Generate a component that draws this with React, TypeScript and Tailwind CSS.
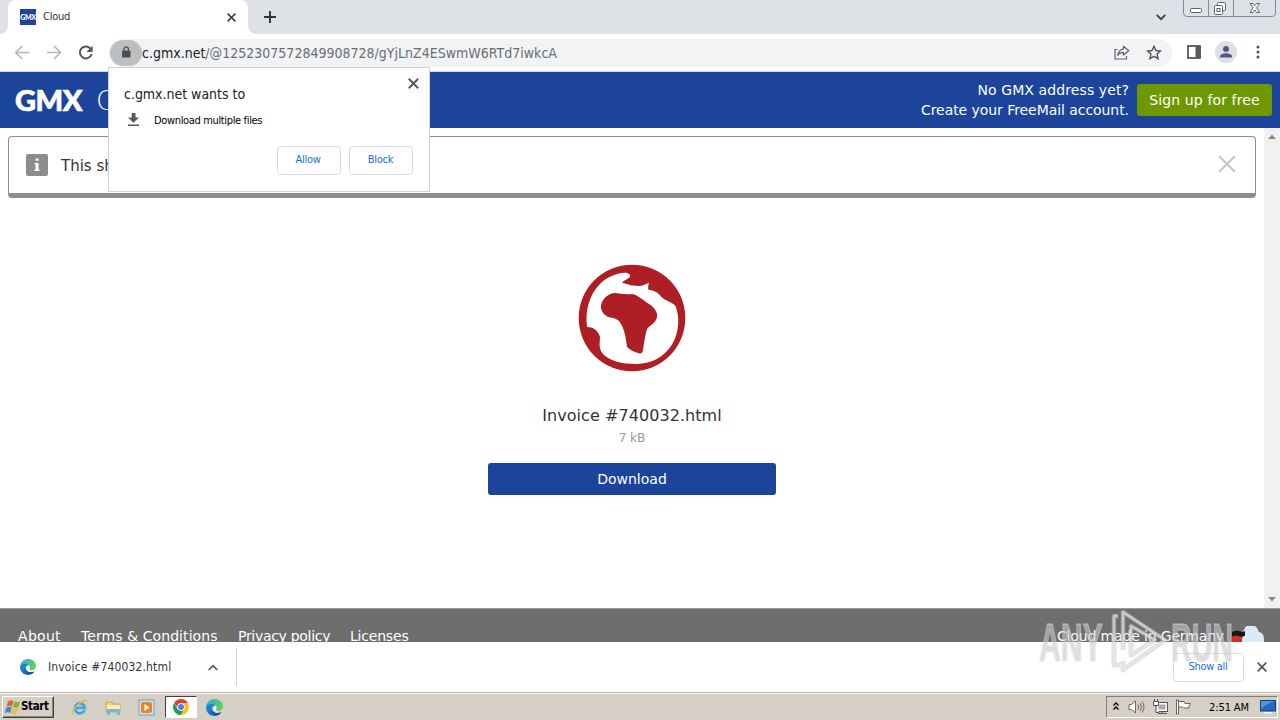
import React from "react";

const verdana = "font-['DejaVu_Sans',sans-serif]";
const tahoma = "font-['DejaVu_Sans_Condensed','DejaVu_Sans',sans-serif] [font-stretch:condensed]";

function Cross({ size, color, width }: { size: number; color: string; width: number }) {
  return (
    <svg width={size} height={size} viewBox="0 0 10 10" stroke={color} strokeWidth={width} fill="none">
      <path d="M.7 .7L9.3 9.3M9.3 .7L.7 9.3" />
    </svg>
  );
}

function EdgeIcon({ size }: { size: number }) {
  return (
    <svg width={size} height={size} viewBox="0 0 16 16">
      <defs>
        <linearGradient id="edgeTop" x1="0" y1="0" x2="1" y2="0.5">
          <stop offset="0" stopColor="#2aa9e0" />
          <stop offset="1" stopColor="#5fd35c" />
        </linearGradient>
        <linearGradient id="edgeLow" x1="0" y1="0" x2="1" y2="1">
          <stop offset="0" stopColor="#1b8ddb" />
          <stop offset="1" stopColor="#1560b5" />
        </linearGradient>
      </defs>
      <path d="M.2 7C.8 3 4 .1 8 .1c4.600 0 8 3.300 8 6.900 0 2.600-1.900 4.200-4.200 4.200-1.800 0-2.800-.7-2.500-1.300.8-1 .7-2-.1-3C7 4.600 2.800 4.200.2 7z" fill="url(#edgeTop)" />
      <path d="M.2 7C2 3.900 6.700 4.300 8.600 6.100 6.300 6.200 5.100 8.200 5.600 10.200c.7 2.700 4.300 4.100 8.600 2.700C11 17 4.700 16.900 1.700 12.900.3 11.100-.1 9 .2 7z" fill="url(#edgeLow)" />
      <path d="M8.600 6.100C5.500 6.500 5 10.100 7 12c2 1.700 5 1.500 7.700.3-.8 1.500-2.700 2.700-4.700 2.900-4.600-.4-7.300-6.300-1.400-9.100z" fill="#155098" />
      <path d="M8.700 6.200c1.400 1 1.500 2.500.6 3.700-.4.900 1.200 1.500 2.900 1.300-1.500.9-3.600.3-4.500-1-.8-1.500-.4-3.200 1-4z" fill="#f2fbff" />
    </svg>
  );
}

function TabStrip() {
  return (
    <div className="flex h-[34px] bg-[#dee1e6]">
      <div className="flex w-2 items-end bg-white">
        <div className="h-[34px] w-2 rounded-br-lg bg-[#dee1e6]" />
      </div>
      <div className="flex h-[34px] w-[240px] items-center rounded-t-lg bg-white pl-3 pr-[12px]">
        <div className="flex h-4 w-4 items-center justify-center bg-[#1c449b] font-['Lato',sans-serif] text-[7px] font-black leading-none tracking-[-0.3px] text-white">
          GMX
        </div>
        <span className={`${tahoma} ml-[7px] flex-1 text-[11px] leading-4 tracking-[-0.25px] text-[#333]`}>Cloud</span>
        <Cross size={9} color="#3c4043" width={1.8} />
      </div>
      <div className="w-2 bg-white">
        <div className="h-[34px] w-2 rounded-bl-lg bg-[#dee1e6]" />
      </div>
      <div className="flex w-[28px] items-center justify-center">
        <svg width="12" height="12" viewBox="0 0 12 12" stroke="#33373b" strokeWidth="2">
          <path d="M6 0v12M0 6h12" />
        </svg>
      </div>
      <div className="flex flex-1 items-start justify-end pr-[4px]">
        <svg className="mr-[17px] mt-[14px]" width="10" height="7" viewBox="0 0 10 7" fill="none" stroke="#3c4043" strokeWidth="1.8">
          <path d="M.7 .8L5 5.200 9.300 .8" />
        </svg>
        <svg width="93" height="17" viewBox="0 0 93 17" fill="none">
          <path d="M.5 0v13q0 3.500 3.500 3.500h85q3.500 0 3.500-3.500V0M25.500 0v16M50.500 0v16" stroke="#868a90" />
          <rect x="7.500" y="8.500" width="11" height="4" rx="1" fill="#fff" stroke="#60646a" />
          <rect x="34.500" y="2.500" width="8" height="8" rx="1" fill="#fff" stroke="#60646a" />
          <rect x="31.500" y="5.500" width="8" height="9" rx="1" fill="#fff" stroke="#60646a" />
          <rect x="34" y="8.500" width="3" height="3" stroke="#60646a" />
          <path d="M67 3.500h3l1.800 2.300 1.800-2.300h3l-3 4.200 3 4.800h-3l-1.800-2.500-1.800 2.500h-3l3-4.800z" fill="#fff" stroke="#60646a" />
        </svg>
      </div>
    </div>
  );
}

function Toolbar() {
  return (
    <div className="flex h-[37px] items-center bg-white pl-[15px] pr-[10px]">
      <svg width="80" height="16" viewBox="0 0 80 16" fill="none">
        <path d="M14.500 7.500H1M7.300 1L.8 7.500l6.500 6.500" stroke="#b6b8bb" strokeWidth="1.700" />
        <path d="M32 7.500h13.500M39 1L45.500 7.500 39 14" stroke="#b6b8bb" strokeWidth="1.700" />
        <path d="M76 4.200A6 6 0 1 0 76.700 9" stroke="#55585c" strokeWidth="2" />
        <path d="M77.700 .7v6.300h-6.300z" fill="#55585c" />
      </svg>
      <div className="ml-[14px] flex h-7 w-[1063px] items-center rounded-full bg-[#f1f3f4] pr-[10px]">
        <div className="ml-px flex h-[26px] w-8 items-center justify-center rounded-full bg-[#bcbfc1]">
          <svg className="mb-[2px]" width="10" height="12" viewBox="0 0 10 12">
            <rect x="1" y="4.500" width="8.500" height="7" rx="1" fill="#4d5053" />
            <path d="M3 5V3.100a2.200 2.200 0 0 1 4.400 0V5" fill="none" stroke="#4d5053" strokeWidth="1.200" />
          </svg>
        </div>
        <span className={`${tahoma} flex-1 whitespace-nowrap text-[14px] leading-5 text-[#6a6e73]`}>
          <span className="tracking-[0px] text-[#202124]">c.gmx.net</span>
          <span className="tracking-[0.01px]">/@1252307572849908728/gYjLnZ4ESwmW6RTd7iwkcA</span>
        </span>
        <svg className="mr-[16px]" width="16" height="15" viewBox="0 0 16 15" fill="none" stroke="#5f6368" strokeWidth="1.200">
          <path d="M3.500 4.500H1v9.500h11.500V11" />
          <path d="M9.500 1.200L14.800 5.700 9.500 10V7.400C7 7.400 5 8.300 3.700 10.500 4.200 6.800 6.500 4.200 9.500 3.800z" strokeLinejoin="round" />
        </svg>
        <svg width="16" height="16" viewBox="0 0 16 16" fill="none" stroke="#4f5358" strokeWidth="1.400">
          <path d="M8 1.300l1.900 4.200 4.600.5-3.400 3.100 1 4.500L8 11.300l-4.100 2.300 1-4.500L1.500 6 6.100 5.500z" />
        </svg>
      </div>
      <svg className="mb-px ml-[15px]" width="14" height="14" viewBox="0 0 14 14">
        <rect x="1" y="1" width="12" height="12" fill="#fff" stroke="#55585c" strokeWidth="1.800" />
        <path d="M8.500 1h5v12h-5z" fill="#55585c" />
      </svg>
      <svg className="mb-px ml-[14px]" width="22" height="22" viewBox="0 0 22 22">
        <circle cx="11" cy="11" r="11" fill="#dcdfe4" />
        <circle cx="11" cy="8" r="3" fill="#4c5b7e" />
        <path d="M5 16.500v-1.300c0-2 3.500-3 6-3s6 1 6 3v1.300z" fill="#4c5b7e" />
      </svg>
      <svg className="mb-px ml-[19px]" width="4" height="14" viewBox="0 0 4 14" fill="#4f5358">
        <circle cx="2" cy="2" r="1.500" />
        <circle cx="2" cy="7" r="1.500" />
        <circle cx="2" cy="12" r="1.500" />
      </svg>
    </div>
  );
}

function PermissionPrompt() {
  return (
    <div className={`${tahoma} absolute left-[108px] top-[67px] flex h-[125px] w-[322px] flex-col border border-[#cfd1d4] bg-white pl-[15px] pr-4 text-black`}>
      <div className="flex h-9 items-end justify-between">
        <span className="text-[14px] leading-5 tracking-[-0.02px] text-[#202124]">c.gmx.net wants to</span>
        <div className="mb-[11px] mr-[-10px] flex h-5 w-5 items-center justify-center">
          <Cross size={11} color="#55585c" width={1.7} />
        </div>
      </div>
      <div className="mt-[6px] flex h-5 items-center">
        <svg className="ml-1" width="11" height="14" viewBox="0 0 11 14" fill="#55585c">
          <path d="M3.700 0h3.800v4.500H11L5.500 9.700 0 4.500h3.700zM0 11.500h11V13H0z" />
        </svg>
        <span className="ml-[15px] mt-px text-[11px] leading-4 tracking-[-0.35px]">Download multiple files</span>
      </div>
      <div className="mt-[16px] flex justify-end gap-2 text-[11px] tracking-[-0.3px] text-[#1a6fd0]">
        <div className="flex h-[29px] w-16 items-center justify-center rounded border border-[#dadce0] pr-0.5">Allow</div>
        <div className="flex h-[29px] w-16 items-center justify-center rounded border border-[#dadce0] pr-px">Block</div>
      </div>
    </div>
  );
}

function SiteHeader() {
  return (
    <div className={`${verdana} flex h-14 items-center bg-[#1c449b] pl-[15px] pr-2 text-white`}>
      <span className="mb-[2px] w-[81px] font-['Lato',sans-serif] text-[29px] font-black leading-none tracking-[-0.4px] [-webkit-text-stroke:0.7px_white]">GMX</span>
      <span className="flex-1 text-[27px] font-extralight leading-none">C</span>
      <div className="mr-2 text-right text-[14px] leading-5">
        <div className="mr-[-0.1px] tracking-[0.1px]">No GMX address yet?</div>
        <div className="tracking-[-0.06px]">Create your FreeMail account.</div>
      </div>
      <div className="flex h-8 w-[135px] items-center justify-center rounded-[3px] bg-[#6f9800] text-[14px] tracking-[0.12px]">Sign up for free</div>
    </div>
  );
}

function Globe() {
  return (
    <svg width="108" height="108" viewBox="0 0 108 108">
      <circle cx="54" cy="54" r="53.300" fill="#ad1f24" />
      <path
        d="M9 63C7 47 11 31 22 20 30 12 42 8 49 9c4 1 4 4 1 5.500-2 1.500-4 2-6 4C50 21 56 22 61 22c4 0 7-2 10-3.500-1 3-1 5-.5 7.500 5 0 9 2 13 7 4 4 9 4 14 9 3 8 4 17 1 28C94 86 80 100 58 100c-14 0-26-3-33-10-5-6-3-12-3-17C20 66 15 63 9 63z"
        fill="#fff"
      />
      <path
        d="M23 41c2-7 7-11 13-12 6 0 11 2 18 1 6 1 12 7 20 12 4 4 6 8 5 11-1 6-7 8-10 12-2 7-3 14-4 21-1 4-2 4-5 3-4-1-8-3-11-6-1-8-2-16-6-23-3-6-8-6-13-7-4-2-8-7-7-12z"
        fill="#ad1f24"
      />
    </svg>
  );
}

function ScrollBar() {
  return (
    <div className="flex w-4 flex-col items-center justify-between bg-[#f1f1f1] py-[6px]">
      <svg width="8" height="5" viewBox="0 0 8 5" fill="#8b8b8b"><path d="M0 5L4 .5 8 5z" /></svg>
      <svg width="8" height="5" viewBox="0 0 8 5" fill="#8b8b8b"><path d="M0 0l4 4.500L8 0z" /></svg>
    </div>
  );
}

function Content() {
  return (
    <div className={`${verdana} flex h-[480px] bg-white text-[#333]`}>
      <div className="flex flex-1 flex-col items-center px-2 pt-2">
        <div className="flex h-[62px] w-full items-center rounded-[4px] border border-b-[5px] border-[#8d8d8d] pl-[17px] pr-[19px]">
          <svg width="22" height="22" viewBox="0 0 22 22">
            <rect width="22" height="22" rx="2" fill="#8d8d8d" />
            <path d="M9.700 4.500h2.800v2.300H9.700zM8.500 9h4v7.500h-3V10.300h-1z" fill="#fff" />
            <path d="M8.500 15.500h5v1.500h-5z" fill="#fff" />
          </svg>
          <span className="ml-[13px] mt-[2px] flex-1 text-[15px] leading-5">This sh</span>
          <div className="mb-[2px]"><Cross size={18} color="#c7c7c7" width={1.3} /></div>
        </div>
        <div className="mt-[66px]"><Globe /></div>
        <div className="mt-[34px] text-[16px] leading-5 tracking-[0.06px]">Invoice #740032.html</div>
        <div className="mt-[4px] text-[12px] leading-4 text-[#999]">7 kB</div>
        <div className="mt-[17px] flex h-8 w-72 items-center justify-center rounded-[3px] bg-[#1c449b] text-[14px] text-white">Download</div>
      </div>
      <ScrollBar />
    </div>
  );
}

function SiteFooter() {
  return (
    <div className={`${verdana} flex h-[34px] items-start overflow-hidden border-t border-[#999] bg-[#6e6e6e] pl-[18px] pr-4 pt-[17px] text-[14px] leading-5 text-white`}>
      <div className="flex flex-1 whitespace-nowrap">
        <span className="w-[63px] tracking-[0.3px]">About</span>
        <span className="w-[157px] tracking-[0.08px]">Terms &amp; Conditions</span>
        <span className="w-[112px] tracking-[-0.3px]">Privacy policy</span>
        <span className="tracking-[-0.2px]">Licenses</span>
      </div>
      <span className="tracking-[-0.15px]">Cloud made in Germany</span>
      <svg className="ml-2 shrink-0" width="32" height="22" viewBox="0 0 32 22">
        <path d="M9 22V8q0-3 3-4Q13-1 19-1q6 0 8 7 5 1 5 7v9z" fill="#dceaf7" />
        <path d="M0 6q4-2 7-1 4 1 6 0v5q-4 2-7 0-3-1-6 1z" fill="#171717" />
        <path d="M0 11q3-2 6-1 3 1 5 1v9H0z" fill="#dc2c20" />
        <path d="M10 12q3-4 6 0 4 1 5 6H10z" fill="#dceaf7" />
      </svg>
    </div>
  );
}

function DownloadShelf() {
  return (
    <div className={`${tahoma} flex h-[50px] items-center bg-white pl-5 pr-[13px]`}>
      <EdgeIcon size={16} />
      <span className="mb-px ml-3 w-[160px] text-[12px] leading-4 tracking-[0.15px] text-[#333]">Invoice #740032.html</span>
      <svg width="10" height="7" viewBox="0 0 10 7" fill="none" stroke="#55585c" strokeWidth="1.700">
        <path d="M.7 6L5 1.600 9.300 6" />
      </svg>
      <div className="ml-[18px] h-[38px] w-px bg-[#cfd1d4]" />
      <div className="flex-1" />
      <div className="mr-[13px] flex h-[29px] w-[71px] items-center justify-center rounded border border-[#dadce0] pr-px text-[11px] tracking-[-0.3px] text-[#1a6fd0]">
        Show all
      </div>
      <Cross size={10} color="#55585c" width={1.8} />
    </div>
  );
}

function Watermark() {
  return (
    <div className="absolute left-[1039px] top-[610px] flex h-[64px] w-[200px] items-center font-['Liberation_Sans',sans-serif] text-[53px] font-bold leading-none text-[#d8d8d8]/50 [-webkit-text-stroke:1px_rgba(225,225,225,0.6)] [text-shadow:0_0_2px_rgba(120,120,120,0.2)]">
      <div className="w-[72px]"><span className="inline-block origin-left scale-x-[0.57]">ANY</span></div>
      <svg className="shrink-0" width="60" height="64" viewBox="0 0 60 64" fill="none" strokeLinejoin="round">
        <path d="M7 6H3v49h6M12 40V2l42 28-42 30v-9M20 16v29l24-15z" stroke="#a8a8a8" strokeOpacity=".35" strokeWidth="5" />
        <path d="M7 6H3v49h6M12 40V2l42 28-42 30v-9M20 16v29l24-15z" stroke="#e6e6e6" strokeOpacity=".7" strokeWidth="3" />
      </svg>
      <div className="w-[68px]"><span className="inline-block origin-left scale-x-[0.54]">RUN</span></div>
    </div>
  );
}

function StartFlag() {
  return (
    <svg width="17" height="16" viewBox="0 0 17 16">
      <path d="M4 2.500Q7 .5 9.500 2L8 7.500Q5.500 6 2.500 7.500z" fill="#e8622a" />
      <path d="M10.500 2.300Q13 3.800 16 2.500L14.500 8Q11.500 9.300 9 7.800z" fill="#79b648" />
      <path d="M2.200 8.500Q5 7 7.700 8.500L6.200 14Q3.700 12.500.6 14z" fill="#3f8cd0" />
      <path d="M8.700 8.900Q11.500 10.300 14.200 9l-1.500 5.500Q9.700 15.800 7.200 14.300z" fill="#f3bd2c" />
    </svg>
  );
}

function Taskbar() {
  return (
    <div className={`${tahoma} flex h-7 items-center border-t border-[#b9b5ad] bg-[#d5cfc6] pt-px shadow-[inset_0_1px_0_#fff] text-black`}>
      <div className="ml-[2px] flex h-[22px] w-[52px] items-center border border-b-[#404040] border-l-white border-r-[#404040] border-t-white pl-px shadow-[inset_-1px_-1px_0_#8c8880]">
        <StartFlag />
        <span className="text-[11.5px] font-bold leading-none tracking-[-0.35px]">Start</span>
      </div>
      <svg className="ml-[17px]" width="17" height="17" viewBox="0 0 17 17" fill="none">
        <path d="M13.500 11.300A5 5 0 1 1 13.900 8.900H4.500" stroke="#3fa4e2" strokeWidth="2.800" />
        <path d="M2.500 15.500C-.5 15 3 8 9 4c4-3 7-3.500 6.500-.5" stroke="#e9b93c" strokeWidth="1.300" />
      </svg>
      <svg className="ml-[17px]" width="17" height="17" viewBox="0 0 17 17">
        <path d="M1 3h6l1 2h7v8H1z" fill="#f3d06c" stroke="#c79a38" strokeWidth=".7" />
        <path d="M2 6h13v4H2z" fill="#fbebae" />
        <path d="M2 10h13v6h-3v-3H5v3H2z" fill="#73b7e0" />
      </svg>
      <svg className="ml-[16px]" width="17" height="17" viewBox="0 0 17 17">
        <rect x="1" y="1" width="15" height="15" fill="#c9e4f7" stroke="#64a2d3" />
        <rect x="3" y="3" width="11" height="11" rx="2" fill="#f0811c" />
        <path d="M6.500 5l5 3.500-5 3.500z" fill="#fff" />
      </svg>
      <div className="ml-[10px] flex h-[22px] w-8 items-center justify-center border border-b-white border-l-[#404040] border-r-white border-t-[#404040] bg-white">
        <svg width="16" height="16" viewBox="0 0 16 16">
          <path d="M1.070 4A8 8 0 0 1 14.930 4L15 4.500H8L4.800 9z" fill="#dc4438" />
          <path d="M8 4.200h6.900A8 8 0 0 1 7 16l4.300-6z" fill="#fbc318" />
          <path d="M1.070 4L4.700 10 8 11.800h2.300L7.500 16A8 8 0 0 1 1.070 4z" fill="#229c52" />
          <circle cx="8" cy="8" r="3.800" fill="#fff" />
          <circle cx="8" cy="8" r="3" fill="#4285f4" />
        </svg>
      </div>
      <div className="ml-[9px]"><EdgeIcon size={17} /></div>
      <div className="flex-1" />
      <div className="mr-[2px] flex h-[22px] w-[172px] items-center border border-b-white border-l-[#808080] border-r-white border-t-[#808080] pl-[6px]">
        <svg className="mb-[2px]" width="6" height="9" viewBox="0 0 6 9" fill="none" stroke="#000" strokeWidth="1.300">
          <path d="M.5 3.500L3 1l2.500 2.500M.5 7.500L3 5l2.500 2.500" />
        </svg>
        <svg className="ml-[9px]" width="17" height="16" viewBox="0 0 17 16" fill="none" stroke="#6a6a6a">
          <path d="M1 5.500h2.500L7.500 2v12l-4-3.500H1z" fill="#fff" />
          <path d="M10 5.500q1.500 2.500 0 5M12.200 4q2.500 4 0 8M14.300 2.500q3.300 5.500 0 11" />
        </svg>
        <svg className="ml-[7px]" width="17" height="16" viewBox="0 0 17 16" fill="none" stroke="#555">
          <rect x="4.500" y="3.500" width="11" height="9" fill="#fff" />
          <rect x="6.500" y="5.500" width="7" height="5" fill="#a8a8a8" stroke="none" />
          <path d="M6 14.500h9M10 12v2" />
          <path d="M1.500 2.500h5v4h-5zM2.500 0v2M5.500 0v2M4 6.500v7h3" fill="#fff" />
        </svg>
        <svg className="ml-[6px]" width="17" height="16" viewBox="0 0 17 16" stroke="#666">
          <path d="M3.500 2.500h5.500l1 2h5.500l-1.800 3 .5 1.500H8.500l-1-1h-4z" fill="#fff" />
          <path d="M1.500 1v14h2V1z" fill="#fff" />
        </svg>
        <span className="ml-[17px] w-[42px] whitespace-nowrap text-[11px] leading-none tracking-[-0.1px]">2:51 AM</span>
        <svg className="ml-[9px]" width="16" height="14" viewBox="0 0 16 14">
          <rect x=".5" y=".5" width="15" height="10.500" fill="#2468bd" stroke="#153f81" />
          <path d="M1 1h14Q7 3 1 9z" fill="#4d98df" />
          <path d="M4 12h8v1.500H4z" fill="#f5f5f5" />
        </svg>
      </div>
    </div>
  );
}

export default function App() {
  return (
    <div className="relative flex h-[720px] w-[1280px] flex-col overflow-hidden bg-white">
      <TabStrip />
      <Toolbar />
      <div className="h-px bg-[#c5d8e8]" />
      <SiteHeader />
      <Content />
      <SiteFooter />
      <DownloadShelf />
      <Taskbar />
      <PermissionPrompt />
      <Watermark />
    </div>
  );
}
